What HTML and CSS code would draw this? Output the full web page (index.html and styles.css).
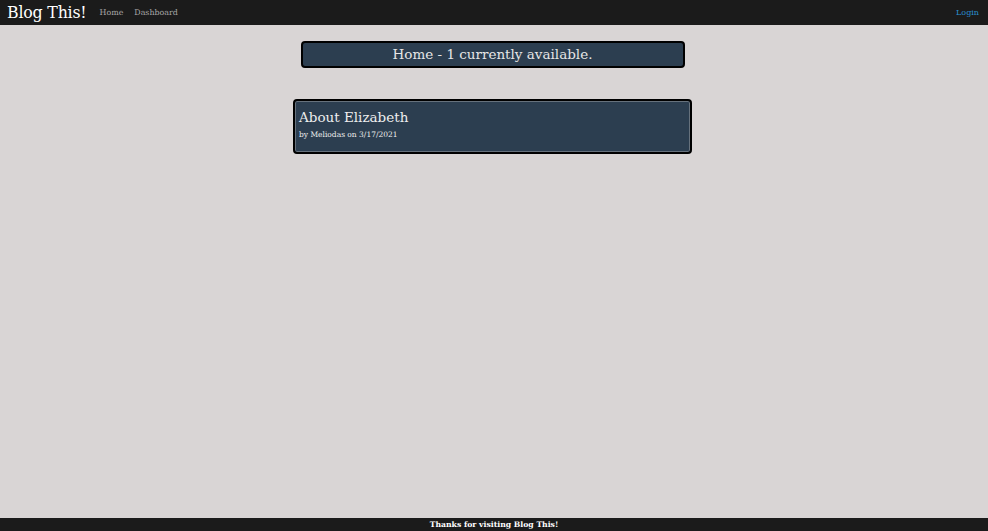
FILE: index.html
```html
<!DOCTYPE html>
<html>
<head>
<meta charset="utf-8">
<link rel="stylesheet" href="styles.css">
</head>
<body>
<div class="page">
  <header class="topbar">
    <div class="left">
      <span class="brand">Blog This!</span>
      <a class="nav" href="#">Home</a>
      <a class="nav" href="#">Dashboard</a>
    </div>
    <a class="login" href="#">Login</a>
  </header>
  <main class="main">
    <div class="heading">Home - 1 currently available.</div>
    <div class="card">
      <div class="card-title">About Elizabeth</div>
      <div class="card-meta">by Meliodas on 3/17/2021</div>
    </div>
  </main>
  <footer class="footer">Thanks for visiting Blog This!</footer>
</div>
</body>
</html>
```
FILE: styles.css
```css
* { box-sizing: border-box; }
html, body { margin: 0; padding: 0; height: 100%; }
body {
  background: #d9d5d5;
  font-family: "DejaVu Serif", "Liberation Serif", serif;
}
.page { display: flex; flex-direction: column; height: 531px; }
.topbar {
  height: 25px;
  background: #1b1b1b;
  display: flex;
  align-items: center;
  justify-content: space-between;
  padding: 0 9px 0 7px;
}
.left { display: flex; align-items: center; }
.brand { color: #fff; font-size: 15.8px; margin-right: 13px; letter-spacing: -0.2px; }
.nav { color: #a9a9a9; font-size: 7.9px; text-decoration: none; margin-right: 11px; }
.login { color: #2a8fcf; font-size: 8px; text-decoration: none; }
.main {
  flex: 1;
  display: flex;
  flex-direction: column;
  align-items: center;
  padding-top: 16px;
  padding-right: 3px;
}
.heading {
  width: 384px;
  height: 27px;
  background: #2c3e50;
  border: 2px solid #000;
  border-radius: 4px;
  color: #e6e6e6;
  font-size: 13.5px;
  text-align: center;
  line-height: 22px;
}
.card {
  margin-top: 31px;
  width: 399px;
  height: 55px;
  background: #2c3e50;
  border: 2px solid #000;
  border-radius: 4px;
  box-shadow: inset 0 0 0 1px #66717c;
  padding: 7px 4px;
  color: #eee;
}
.card-title { font-size: 13.5px; line-height: 19px; }
.card-meta { font-size: 7.5px; line-height: 12px; margin-top: 2px; }
.footer {
  height: 13px;
  background: #1b1b1b;
  color: #fff;
  font-size: 7.7px;
  font-weight: bold;
  text-align: center;
  line-height: 13px;
}
```
